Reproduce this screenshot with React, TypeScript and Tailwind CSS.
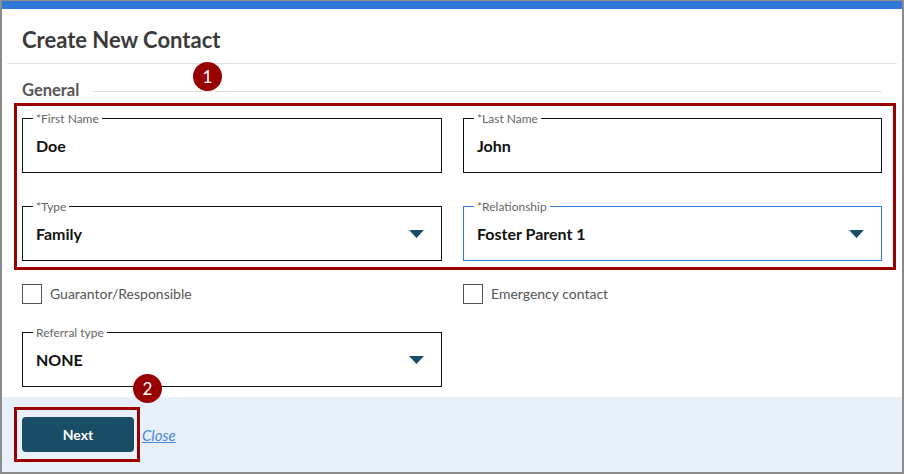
import React from "react";

function Caret() {
  return (
    <svg width="15" height="8" viewBox="0 0 15 8" className="shrink-0">
      <polygon points="0,0 15,0 7.5,8" fill="#1b4d68" />
    </svg>
  );
}

function Field({ label, value, select, focused }: { label: string; value: string; select?: boolean; focused?: boolean }) {
  return (
    <div
      className={`relative h-[55px] border ${focused ? "border-[#2f7bd6]" : "border-[#111]"} flex items-center pl-[13px] pr-[17px]`}
    >
      <span className="absolute left-[10px] top-[-7px] bg-white px-[3px] text-[12px] leading-[13px] text-[#666]">{label}</span>
      <span className="flex-1 text-[16px] font-bold text-[#111] leading-[22px]">{value}</span>
      {select && <Caret />}
    </div>
  );
}

function Check({ label }: { label: string }) {
  return (
    <div className="flex items-center gap-[8px]">
      <div className="w-[20px] h-[20px] border border-[#555] bg-white" />
      <span className="text-[14px] text-[#555]">{label}</span>
    </div>
  );
}

function Badge({ n, className }: { n: string; className: string }) {
  return (
    <div
      className={`absolute w-[29px] h-[29px] rounded-full bg-[#990000] text-white text-[17px] leading-[29px] text-center ${className}`}
    >
      {n}
    </div>
  );
}

export default function App() {
  return (
    <div
      className="w-[904px] h-[474px] bg-[#8c8c8c] pt-[1px] pl-[2px] pr-[2px] pb-[2px]"
      style={{ fontFamily: "Lato, 'Liberation Sans', sans-serif" }}
    >
      <div className="relative w-[900px] h-[471px] bg-white flex flex-col overflow-hidden">
        <div className="h-[8px] bg-[#2f78d8] shrink-0" />
        <div className="h-[54px] pl-[20px] pt-[17px] shrink-0">
          <h1 className="text-[22px] leading-[28px] font-bold text-[#3a3a3a]">Create New Contact</h1>
        </div>
        <div className="mx-[5px] border-b border-[#e2e2e2]" />
        <div className="px-[20px] pt-[16px] flex-1">
          <div className="flex items-center gap-[14px] h-[20px]">
            <span className="text-[16.5px] font-bold text-[#555]">General</span>
            <div className="flex-1 border-b border-[#e2e2e2] mt-[2px]" />
          </div>
          <div className="ml-[-8px] mr-[-14px] mt-[3px] border-[3px] border-[#990000] pl-[5px] pr-[11px] pt-[12px] pb-[6px]">
            <div className="grid grid-cols-[420px_419px] gap-x-[21px] gap-y-[33px]">
              <Field label="*First Name" value="Doe" />
              <Field label="*Last Name" value="John" />
              <Field label="*Type" value="Family" select />
              <Field label="*Relationship" value="Foster Parent 1" select focused />
            </div>
          </div>
          <div className="grid grid-cols-[420px_419px] gap-x-[21px] mt-[13px]">
            <Check label="Guarantor/Responsible" />
            <Check label="Emergency contact" />
          </div>
          <div className="w-[420px] mt-[28px]">
            <Field label="Referral type" value="NONE" select />
          </div>
        </div>
        <div className="h-[75px] bg-[#e8f0fa] shrink-0 pl-[12px] pt-[10px] flex items-start">
          <div className="border-[3px] border-[#990000] pl-[5px] pr-[3px] pt-[7px] pb-[7px]">
            <button className="w-[112px] h-[35px] rounded-[4px] bg-[#194d66] text-white text-[14px] font-bold">Next</button>
          </div>
          <a href="#" className="ml-[2px] mt-[18px] text-[15px] leading-[20px] italic underline text-[#4a86d4]">Close</a>
        </div>
        <Badge n="1" className="left-[191px] top-[61px]" />
        <Badge n="2" className="left-[131px] top-[373px]" />
      </div>
    </div>
  );
}
